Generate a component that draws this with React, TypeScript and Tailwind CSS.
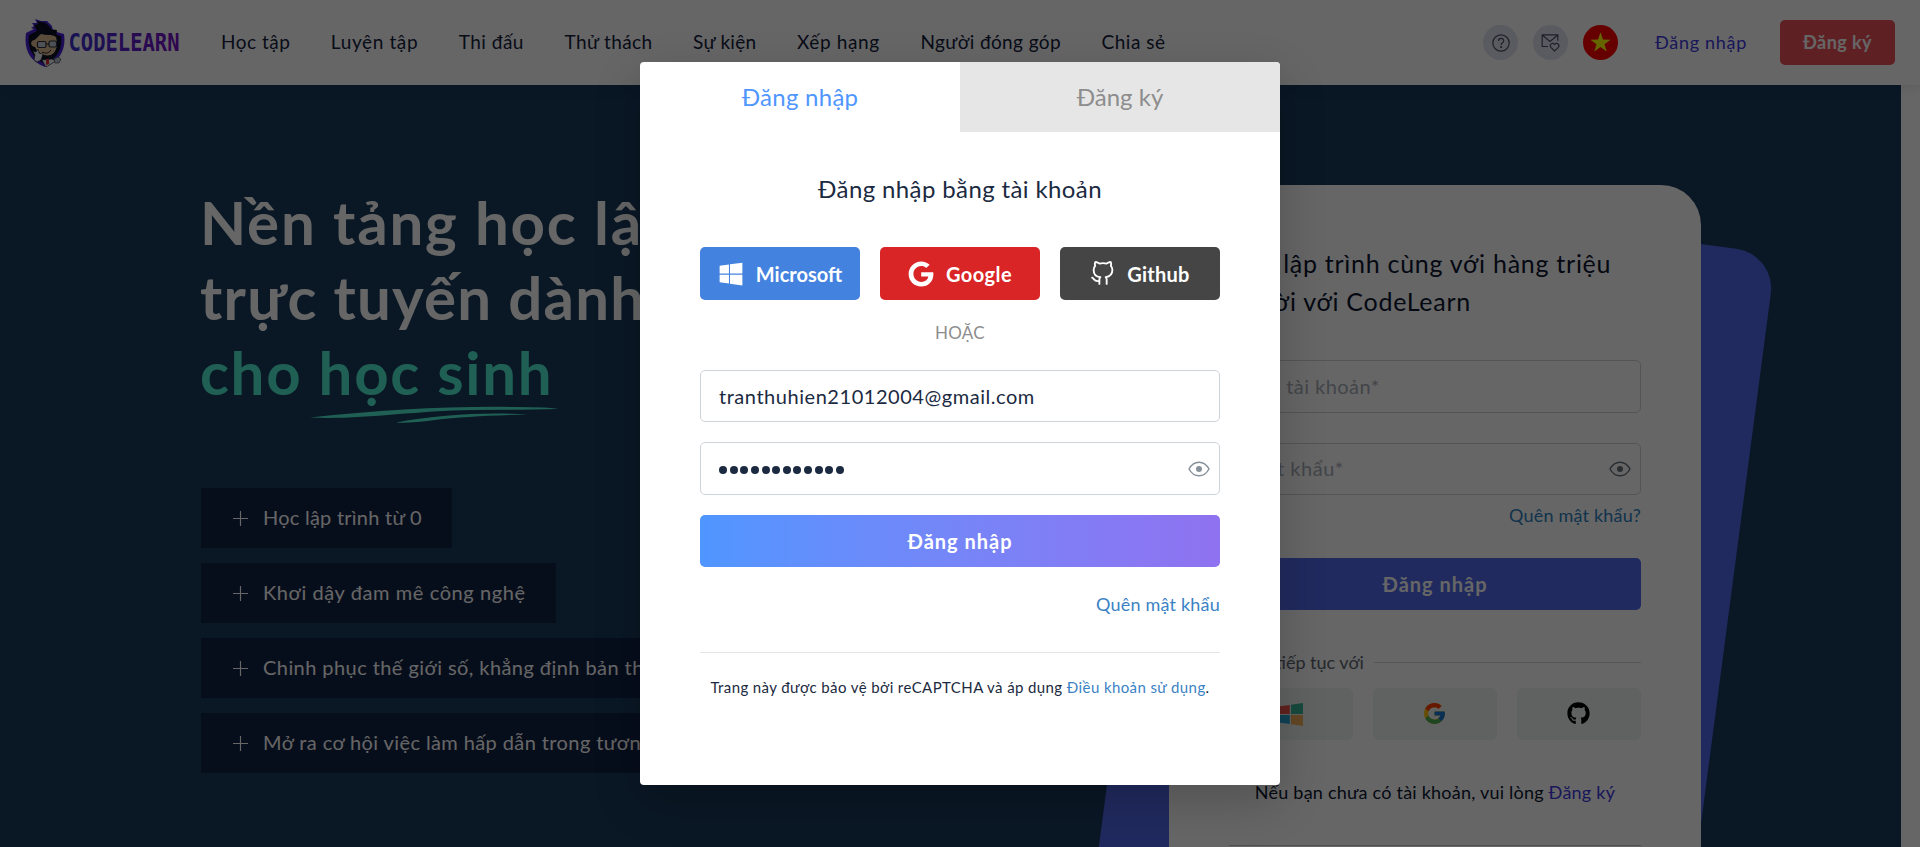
import type { ReactNode } from "react";
import { FaGithub, FaGoogle, FaWindows } from "react-icons/fa";
import { FcGoogle } from "react-icons/fc";
import { FiGithub } from "react-icons/fi";

const navItems = [
  { label: "Học tập", tracking: "tracking-[0.5px]" },
  { label: "Luyện tập", tracking: "tracking-[0.62px]" },
  { label: "Thi đấu", tracking: "tracking-[0.5px]" },
  { label: "Thử thách", tracking: "tracking-[0.4px]" },
  { label: "Sự kiện", tracking: "tracking-[0.3px]" },
  { label: "Xếp hạng", tracking: "tracking-[0.66px]" },
  { label: "Người đóng góp", tracking: "tracking-[0.4px]" },
  { label: "Chia sẻ", tracking: "tracking-[0.51px]" },
];

const features = [
  { label: "Học lập trình từ 0", tracking: "tracking-[0.24px]" },
  { label: "Khơi dậy đam mê công nghệ", tracking: "tracking-[0.59px]" },
  { label: "Chinh phục thế giới số, khẳng định bản thân", tracking: "tracking-[0.43px]" },
  { label: "Mở ra cơ hội việc làm hấp dẫn trong tương lai", tracking: "tracking-[0.4px]" },
];

function Logo() {
  return (
    <svg className="h-[50px] w-[160px] shrink-0" viewBox="0 0 160 50">
      <defs>
        <linearGradient id="wordmark" x1="0" x2="1" y1="0" y2="0">
          <stop offset="0" stopColor="#3a30d0" />
          <stop offset="1" stopColor="#7a10c8" />
        </linearGradient>
      </defs>
      <path d="M7 5l5 0-2-4 6 2 6 0 5 5 1 5 11 3c2 13-2 26-19 33C3 42-1 30 1 15l8-4-3-1 3-2z" fill="#4a22d8" />
      <path d="M9 7l4-1-1-3 9 2 5 5 1 5 9 3c2 12-3 22-16 28C7 40 2 29 4 17l8-4z" fill="#0b0f24" />
      <path d="M9 22c2-5 5-6 9-7 5 3 10 1 13 4 2 7 1 15-5 18-7 2-14-3-16-8-5-1-5-6-1-7z" fill="#e2bd92" />
      <path d="M9 22c3-1 5-6 8-6 6 2 10-1 14 3l1-7-16-2-8 6z" fill="#0b0f24" />
      <g fill="#c4ccd6" stroke="#2a2f3d" strokeWidth="1.2">
        <rect x="12.500" y="23.500" width="8.500" height="6" rx="1.500" />
        <rect x="24" y="23" width="7.500" height="6" rx="1.500" />
      </g>
      <path d="M21 26h3M17 34q6 3 9-2" stroke="#3a2c26" fill="none" />
      <path d="M9 42l1-5-2-4 3 1 2-3 1 4 4 1-2 6-4 2zM17 42l10-1 4 2-10 6z" fill="#edf0f3" stroke="#1e2230" strokeWidth=".6" />
      <path d="M21 41l3 0 0 5-3 1z" fill="#e02c35" />
      <path d="M29 41l4-2 3 2-2 4-4 0z" fill="#bcc3cc" stroke="#333947" strokeWidth=".6" />
      <text
        x="43.500"
        y="33.200"
        fontSize="24"
        fontWeight="700"
        textLength="111"
        lengthAdjust="spacingAndGlyphs"
        fill="url(#wordmark)"
        className="font-['DejaVu_Sans_Mono',monospace]"
      >
        CODELEARN
      </text>
    </svg>
  );
}

function RoundIcon({ children }: { children: ReactNode }) {
  return (
    <span className="flex size-[35px] items-center justify-center rounded-full bg-[#e1e2f2] text-[#4a5266]">
      {children}
    </span>
  );
}

function Eye({ className }: { className: string }) {
  return (
    <svg className={className} viewBox="0 0 22 16" fill="none">
      <path d="M1 8C3.500 3.500 7 1.200 11 1.200S18.500 3.500 21 8c-2.500 4.500-6 6.800-10 6.800S3.500 12.500 1 8z" stroke="currentColor" strokeWidth="1.500" />
      <circle cx="11" cy="8" r="3" fill="currentColor" />
    </svg>
  );
}

function Header() {
  return (
    <header className="relative flex h-[85px] items-center bg-white pl-[25px] pr-[25px] shadow-[0_2px_12px_rgba(0,0,0,0.1)]">
      <Logo />
      <nav className="ml-9 flex gap-[40.500px] text-[19px] text-[#14213d]">
        {navItems.map((item) => (
          <a key={item.label} className={`whitespace-nowrap ${item.tracking}`}>
            {item.label}
          </a>
        ))}
      </nav>
      <div className="ml-auto flex items-center">
        <div className="flex gap-[15px]">
          <RoundIcon>
            <svg className="size-[18px]" viewBox="0 0 18 18" fill="none" stroke="currentColor" strokeWidth="1.200">
              <circle cx="9" cy="9" r="8.200" />
              <path d="M6.500 7c0-3.400 5.200-3.300 5.200-.3 0 2-2.600 2-2.600 4.300" />
              <circle cx="9.100" cy="13" r=".5" fill="currentColor" />
            </svg>
          </RoundIcon>
          <RoundIcon>
            <svg className="size-[19px]" viewBox="0 0 19 19" fill="none" stroke="currentColor" strokeWidth="1.200">
              <path d="M7 13.500H1.200V1.800h15.600v6M1.200 2l7.800 6.500L16.800 2" />
              <path d="M13.600 18l-3.700-3.700c-2-2.600 1.700-5.600 3.700-2.800 2-2.800 5.700.2 3.700 2.800z" />
            </svg>
          </RoundIcon>
          <svg className="size-[35px]" viewBox="0 0 35 35">
            <circle cx="17.500" cy="17.500" r="17.500" fill="#ff0000" />
            <path d="M17.500 7.300l2.450 7.250 7.650.1-6.130 4.570 2.270 7.300-6.240-4.420-6.240 4.420 2.270-7.300L7.400 14.650l7.650-.1z" fill="#ffff00" />
          </svg>
        </div>
        <a className="ml-[37px] w-[92px] whitespace-nowrap text-[18px] tracking-[0.7px] text-[#4038e0]">Đăng nhập</a>
        <a className="ml-[33px] flex h-[45px] w-[115px] items-center justify-center rounded-[5px] bg-[#ee505a] text-[18px] font-bold tracking-[0.44px] text-white">
          Đăng ký
        </a>
      </div>
    </header>
  );
}

function Hero() {
  return (
    <div className="pl-[200px] pt-[100px]">
      <h1 className="whitespace-nowrap text-[60px] font-bold leading-[75px] text-white">
        <span className="block tracking-[1.81px]">Nền tảng học lập trình</span>
        <span className="block tracking-[1.25px]">trực tuyến dành</span>
        <span className="block tracking-[1.7px] text-[#50eed2]">cho học sinh</span>
      </h1>
      <svg className="-mt-1 ml-[110px] h-[18px] w-[248px]" viewBox="0 0 248 18" fill="#50eed2">
        <path d="M0 11.500C70 4 140 0 205 1q35 0 43 2-35 1-85 1C100 5 50 14 0 11.500z" />
        <path d="M86 16.500C130 8 180 6 218 8.500 180 9.500 150 11 125 14q-25 3.500-39 2.500z" />
      </svg>
      <ul className="ml-px mt-16 flex flex-col items-start gap-[15px]">
        {features.map((item) => (
          <li key={item.label} className="flex h-[60px] items-center bg-[#0f2144] pl-8 pr-[30px] text-[20px] text-white">
            <svg className="mr-[15px] size-[15px]" viewBox="0 0 15 15" stroke="currentColor" strokeWidth="1.200">
              <path d="M7.500 0v15M0 7.500h15" />
            </svg>
            <span className={`whitespace-nowrap pb-0.5 ${item.tracking}`}>{item.label}</span>
          </li>
        ))}
      </ul>
    </div>
  );
}

function SignupCard() {
  return (
    <div className="relative mr-[200px] mt-[100px] w-[532px] shrink-0">
      <div className="absolute -right-[75px] top-[69px] h-[1000px] w-[594px] origin-top-right rotate-[7.5deg] rounded-[40px] bg-[#5069eb]" />
      <div className="relative h-[900px] rounded-[40px] bg-white px-[60px] pt-[59px]">
        <h2 className="whitespace-nowrap text-[25px] leading-[38px] tracking-[0.73px] text-[#0b1630]">
          Học lập trình cùng với hàng triệu
          <br />
          người với CodeLearn
        </h2>
        <div className="mt-10 flex h-[53px] items-center rounded-[5px] border border-[#ced4da] px-[18px] pb-0.5 text-[20px] tracking-[0.45px] text-[#a7adb8]">
          Tên tài khoản*
        </div>
        <div className="mt-[30px] flex h-[52px] items-center justify-between rounded-[5px] border border-[#ced4da] pl-[18px] pr-[9px] text-[20px] tracking-[0.5px] text-[#a7adb8]">
          <span className="pb-0.5">Mật khẩu*</span>
          <Eye className="h-4 w-[22px] text-[#6b747c]" />
        </div>
        <p className="mt-2 text-right text-[18px] leading-6 tracking-[0.2px] text-[#2f7fc0]">Quên mật khẩu?</p>
        <div className="mt-[31px] flex h-[52px] items-center justify-center rounded-[5px] bg-[#5069eb] text-[20px] font-bold tracking-[0.99px] text-white">
          Đăng nhập
        </div>
        <div className="mt-10 flex h-6 items-center gap-2.5 text-[18px] text-[#5c6672]">
          <span className="whitespace-nowrap">Hoặc tiếp tục với</span>
          <span className="h-px flex-1 bg-[#d4d8dc]" />
        </div>
        <div className="mt-3.5 grid h-[52px] grid-cols-3 gap-5">
          <span className="flex items-center justify-center rounded-[5px] bg-[#f0f5f4]">
            <svg className="size-[23px]" viewBox="0 0 23 23">
              <path d="M0 3.200L9.800 1.900v9H0z" fill="#f0554c" />
              <path d="M11 1.700L23 0v10.900H11z" fill="#3cb898" />
              <path d="M0 12.100h9.800v9L0 19.800z" fill="#27a5d8" />
              <path d="M11 12.100h12V23l-12-1.700z" fill="#f7b25b" />
            </svg>
          </span>
          <span className="flex items-center justify-center rounded-[5px] bg-[#f0f5f4] pb-0.5 pr-0.5">
            <FcGoogle className="size-[25px]" />
          </span>
          <span className="flex items-center justify-center rounded-[5px] bg-[#f0f5f4] pb-0.5 pr-0.5 text-black">
            <FaGithub className="size-[23px]" />
          </span>
        </div>
        <p className="mt-10 whitespace-nowrap text-center text-[18px] leading-6 tracking-[0.22px] text-[#0b1630]">
          Nếu bạn chưa có tài khoản, vui lòng <a className="text-[#4038e0]">Đăng ký</a>
        </p>
        <hr className="mt-[41px] border-[#c8ccd0]" />
      </div>
    </div>
  );
}

function LoginModal() {
  return (
    <div className="h-[723px] w-[640px] overflow-hidden rounded-[4px] bg-white text-[#1b2a41]">
      <div className="grid h-[70px] grid-cols-2 text-[24px]">
        <div className="flex items-center justify-center tracking-[0.26px] text-[#4f96ff]">Đăng nhập</div>
        <div className="flex items-center justify-center bg-[#e6e6e6] text-[#8d8d8d]">Đăng ký</div>
      </div>
      <div className="px-[60px]">
        <h3 className="mt-[42px] text-center text-[24px] leading-[30px] tracking-[0.38px]">Đăng nhập bằng tài khoản</h3>
        <div className="mt-[43px] grid h-[53px] grid-cols-3 gap-5 text-[20px] font-bold text-white">
          <span className="flex items-center justify-center rounded-[5px] bg-[#4382de]">
            <FaWindows className="mr-3 size-[26px]" />
            <span>Microsoft</span>
          </span>
          <span className="flex items-center justify-center rounded-[5px] bg-[#d92525] tracking-[0.42px]">
            <FaGoogle className="mr-3 size-[26px]" />
            <span>Google</span>
          </span>
          <span className="flex items-center justify-center rounded-[5px] bg-[#454545] tracking-[0.24px]">
            <FiGithub className="mr-3 size-[25px] stroke-[1.800]" />
            <span>Github</span>
          </span>
        </div>
        <p className="mt-[21px] text-center text-[17px] leading-6 tracking-[0.3px] text-[#8d8d8d]">HOẶC</p>
        <div className="mt-[25px] flex h-[52px] items-center rounded-[5px] border border-[#ced4da] pl-[18px] text-[20px] tracking-[0.54px]">
          tranthuhien21012004@gmail.com
        </div>
        <div className="mt-5 flex h-[53px] items-center justify-between rounded-[5px] border border-[#ced4da] pl-[18px] pr-[9px]">
          <span className="flex gap-[2.640px] pt-[3px]">
            {Array.from({ length: 12 }, (_, i) => (
              <span key={i} className="size-2 rounded-full bg-[#1b2a41]" />
            ))}
          </span>
          <Eye className="h-4 w-[22px] text-[#87919a]" />
        </div>
        <div className="mt-5 flex h-[52px] items-center justify-center rounded-[5px] bg-linear-to-r from-[#4f96ff] to-[#8f72f0] text-[20px] font-bold tracking-[0.99px] text-white">
          Đăng nhập
        </div>
        <p className="mt-[25px] text-right text-[18px] leading-6 tracking-[0.21px] text-[#3b82c4]">Quên mật khẩu</p>
        <hr className="mt-9 border-[#e3e5e8]" />
        <p className="mt-6 whitespace-nowrap text-center text-[15px] leading-5 tracking-[0.4px]">
          Trang này được bảo vệ bởi reCAPTCHA và áp dụng <a className="text-[#3b82c4]">Điều khoản sử dụng</a>.
        </p>
      </div>
    </div>
  );
}

export default function App() {
  return (
    <div className="relative h-[847px] overflow-hidden bg-white font-['Lato','Noto_Sans',sans-serif]">
      <div className="relative z-10">
        <Header />
      </div>
      <section className="flex h-[762px] w-[1901px] justify-between overflow-hidden bg-[#193a5c]">
        <Hero />
        <SignupCard />
      </section>
      <div className="absolute inset-0 z-20 flex justify-center bg-black/60 pt-[62px]">
        <div className="h-[723px] rounded-[4px] shadow-[0_16px_48px_rgba(0,0,0,0.2)]">
          <LoginModal />
        </div>
      </div>
    </div>
  );
}
